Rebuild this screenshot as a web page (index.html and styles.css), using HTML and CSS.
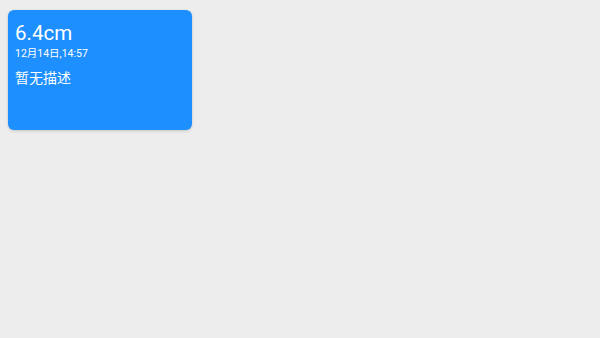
FILE: index.html
```html
<!DOCTYPE html>
<html>
<head>
<meta charset="utf-8">
<link rel="stylesheet" href="styles.css">
</head>
<body>
<div class="card">
  <div class="value">6.4cm</div>
  <div class="time">12月14日,14:57</div>
  <div class="desc">暂无描述</div>
</div>
</body>
</html>
```
FILE: styles.css
```css
html, body {
  margin: 0;
  padding: 0;
  background: #ededed;
  width: 600px;
  height: 338px;
  overflow: hidden;
}
body {
  padding: 10px 8px;
  box-sizing: border-box;
  font-family: Roboto, "Noto Sans CJK SC", sans-serif;
}
.card {
  width: 184px;
  height: 120px;
  box-sizing: border-box;
  background: #1e8fff;
  border-radius: 6px;
  box-shadow: 0 1px 3px rgba(0,0,0,0.18);
  color: #ffffff;
  padding: 10px 7px;
}
.value {
  font-size: 20.5px;
  line-height: 26px;
}
.time {
  font-size: 10.5px;
  line-height: 14px;
  margin-top: 1px;
}
.desc {
  font-size: 14px;
  line-height: 18px;
  margin-top: 8px;
}
```
